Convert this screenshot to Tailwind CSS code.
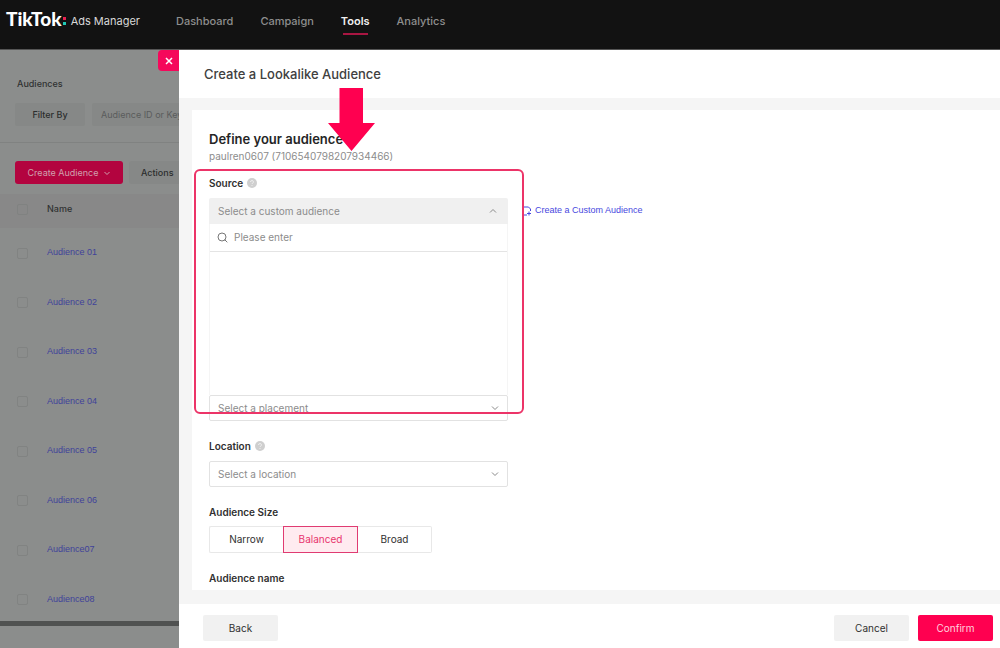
<!DOCTYPE html>
<html lang="en">
    <head>
        <meta charset="UTF-8" />
        <meta name="viewport" content="width=device-width, initial-scale=1.0" />
        <title>TikTok Ads Manager - Create a Lookalike Audience</title>
        <script src="https://cdn.jsdelivr.net/npm/@tailwindcss/browser@4"></script>
    </head>
    <body class="h-screen flex flex-col overflow-hidden bg-white font-['Inter',sans-serif] text-[10px] text-[#303030]">
        <!-- Top navigation -->
        <header class="h-[50px] shrink-0 flex items-start bg-[#121212] border-b border-[#555] px-1.5">
            <a href="#" class="flex items-center h-[42px] w-[170px] text-[11px] text-[#d8d8d8]">
                <span class="font-['Lato',sans-serif] font-black text-[19px] leading-5 pb-1 text-white">TikTok</span>
                <svg class="w-[5px] h-[10px] mr-1" viewBox="0 0 5 10" aria-hidden="true">
                    <rect x="1" y="1" width="3" height="3" fill="#e8204f" />
                    <rect x="1" y="6" width="3" height="3" fill="#1fc9b4" />
                </svg>
                <span>Ads Manager</span>
            </a>
            <nav class="flex gap-[27px] font-medium text-[#8e8e8e] text-[11px]">
                <a href="#" class="h-[42px] flex items-center">Dashboard</a>
                <a href="#" class="h-[42px] flex items-center">Campaign</a>
                <a href="#" class="relative h-[42px] flex items-center font-semibold text-[#f0f0f0]" aria-current="page">
                    Tools
                    <span class="absolute inset-x-0.5 bottom-[7px] h-0.5 bg-[#a81642]"></span>
                </a>
                <a href="#" class="h-[42px] flex items-center">Analytics</a>
            </nav>
        </header>

        <main class="flex-1 min-h-0 flex">
            <!-- Dimmed audience list -->
            <aside class="relative w-[179px] shrink-0 overflow-hidden bg-[#8b8d8c] whitespace-nowrap text-[9px]">
                <button class="absolute top-0 right-0 size-[21px] rounded-l bg-[#f5085b] flex items-center justify-center" aria-label="Close">
                    <svg class="size-2" viewBox="0 0 8 8" fill="none" stroke="#fff" stroke-width="1.5" aria-hidden="true">
                        <path d="M1 1l6 6M7 1L1 7" />
                    </svg>
                </button>

                <div class="h-[93px] pt-6 pl-[15px] border-b border-[#808281]">
                    <h2 class="pl-0.5 h-5 leading-5 font-medium text-[#303232]">Audiences</h2>
                    <div class="mt-[9px] flex gap-[7px]">
                        <button class="w-[70px] h-[23px] shrink-0 rounded-xs bg-[#868887] font-medium text-[#2c2e2e]">Filter By</button>
                        <input type="text" placeholder="Audience ID or Keyword" aria-label="Audience ID or Keyword" class="w-40 h-[23px] shrink-0 px-[9px] rounded-xs bg-[#868887] placeholder:text-[#5a5c5c]" />
                    </div>
                </div>

                <div class="flex gap-1.5 pt-[18px] pl-[15px]">
                    <button class="w-[108px] h-[23px] shrink-0 rounded-[3px] bg-[#b3043f] text-[#d0a0ae] flex items-center justify-center gap-1">
                        Create Audience
                        <svg class="size-2" viewBox="0 0 8 8" fill="none" stroke="currentColor" aria-hidden="true">
                            <path d="M1.5 3L4 5.5 6.5 3" />
                        </svg>
                    </button>
                    <button class="w-20 h-[23px] shrink-0 rounded-[3px] bg-[#868887] pl-3 text-left font-medium text-[#2c2e2e]">Actions</button>
                </div>

                <table class="mt-2.5 w-full text-left font-['Liberation_Sans',sans-serif] text-[#3f429a]">
                    <thead>
                        <tr class="h-[34px] bg-[#888888] font-['Inter',sans-serif] text-[#303232]">
                            <th class="w-[47px] pl-[17px] pb-1"><input type="checkbox" aria-label="Select all" class="block appearance-none size-[11px] border border-[#808281] rounded-xs" /></th>
                            <th class="pb-1 font-medium">Name</th>
                        </tr>
                    </thead>
                    <tbody>
                        <tr class="h-[50px]">
                            <td class="pl-[17px]"><input type="checkbox" aria-label="Audience 01" class="block appearance-none size-[11px] border border-[#818382] rounded-xs" /></td>
                            <td><a href="#">Audience 01</a></td>
                        </tr>
                        <tr class="h-[49px]">
                            <td class="pl-[17px]"><input type="checkbox" aria-label="Audience 02" class="block appearance-none size-[11px] border border-[#818382] rounded-xs" /></td>
                            <td><a href="#">Audience 02</a></td>
                        </tr>
                        <tr class="h-[50px]">
                            <td class="pl-[17px]"><input type="checkbox" aria-label="Audience 03" class="block appearance-none size-[11px] border border-[#818382] rounded-xs" /></td>
                            <td><a href="#">Audience 03</a></td>
                        </tr>
                        <tr class="h-[49px]">
                            <td class="pl-[17px]"><input type="checkbox" aria-label="Audience 04" class="block appearance-none size-[11px] border border-[#818382] rounded-xs" /></td>
                            <td><a href="#">Audience 04</a></td>
                        </tr>
                        <tr class="h-[50px]">
                            <td class="pl-[17px]"><input type="checkbox" aria-label="Audience 05" class="block appearance-none size-[11px] border border-[#818382] rounded-xs" /></td>
                            <td><a href="#">Audience 05</a></td>
                        </tr>
                        <tr class="h-[49px]">
                            <td class="pl-[17px]"><input type="checkbox" aria-label="Audience 06" class="block appearance-none size-[11px] border border-[#818382] rounded-xs" /></td>
                            <td><a href="#">Audience 06</a></td>
                        </tr>
                        <tr class="h-[50px]">
                            <td class="pl-[17px]"><input type="checkbox" aria-label="Audience07" class="block appearance-none size-[11px] border border-[#818382] rounded-xs" /></td>
                            <td><a href="#">Audience07</a></td>
                        </tr>
                        <tr class="h-[49px]">
                            <td class="pl-[17px]"><input type="checkbox" aria-label="Audience08" class="block appearance-none size-[11px] border border-[#818382] rounded-xs" /></td>
                            <td><a href="#">Audience08</a></td>
                        </tr>
                    </tbody>
                </table>
                <!-- Horizontal scrollbar -->
                <div class="absolute inset-x-0 bottom-[22px] h-[5px] bg-[#505251]"></div>
            </aside>

            <!-- Drawer -->
            <section class="flex-1 min-w-0 flex flex-col">
                <div class="h-12 shrink-0 flex items-center pl-[25px] pt-0.5">
                    <h1 class="text-[13px] font-medium text-[#404040]">Create a Lookalike Audience</h1>
                </div>

                <div class="flex-1 min-h-0 bg-[#f5f5f5] pt-3 pb-3.5 pl-[13px]">
                    <div class="relative h-full bg-white">
                        <form class="h-full overflow-hidden pl-[17px] pt-[19px]">
                            <h2 class="h-5 leading-5 text-[13px] font-semibold text-[#252525]">Define your audience</h2>
                            <p class="h-3.5 leading-3.5 text-[#8c8c8c]">paulren0607 (7106540798207934466)</p>

                            <div class="mt-2.5 flex items-center gap-1 h-5 font-semibold">
                                <label for="source">Source</label>
                                <svg class="size-2.5" viewBox="0 0 10 10" aria-hidden="true">
                                    <circle cx="5" cy="5" r="5" fill="#cfcfcf" />
                                    <path d="M3.6 4a1.4 1.4 0 1 1 2 1.2Q5 5.5 5 6M5 7v.9" fill="none" stroke="#f4f4f4" stroke-width=".9" />
                                </svg>
                            </div>
                            <div class="mt-[5px] flex items-center gap-3.5">
                                <div class="relative w-[299px]">
                                    <select id="source" class="block appearance-none w-full h-[26px] px-[9px] rounded-t-xs bg-[#f0f0f0] text-[#8c8c8c]">
                                        <option>Select a custom audience</option>
                                    </select>
                                    <svg class="absolute right-2.5 top-2 size-2.5 pointer-events-none" viewBox="0 0 10 10" fill="none" stroke="#8a8a8a" aria-hidden="true">
                                        <path d="M2 6.500L5 3.500 8 6.500" />
                                    </svg>
                                </div>
                                <a href="#" class="flex items-center gap-[3px] font-['Liberation_Sans',sans-serif] text-[9px] text-[#4747e0]">
                                    <svg class="size-2.5" viewBox="0 0 10 10" fill="none" stroke="currentColor" aria-hidden="true">
                                        <path d="M5 9H1.5V1H6.5L8.5 3V5M5 7.5H9M7 5.5V9.5" />
                                    </svg>
                                    Create a Custom Audience
                                </a>
                            </div>
                            <!-- Open drop-down list, empty -->
                            <div class="w-[299px] h-[171px] border-x border-[#f5f5f5]">
                                <label class="flex items-center gap-1.5 h-7 px-[7px] border-b border-[#e4e4e4]">
                                    <svg class="size-[11px]" viewBox="0 0 11 11" fill="none" stroke="#777" aria-hidden="true">
                                        <circle cx="5" cy="5" r="4" />
                                        <path d="M7.5 7.5L10.3 10.3" />
                                    </svg>
                                    <input type="text" placeholder="Please enter" class="flex-1 placeholder:text-[#8c8c8c]" />
                                </label>
                            </div>
                            <div class="relative w-[299px]">
                                <select aria-label="Placement" class="block appearance-none w-full h-[26px] px-2 rounded-xs border border-[#e2e2e2] bg-white text-[#8c8c8c]">
                                    <option>Select a placement</option>
                                </select>
                                <svg class="absolute right-2 top-2 size-2.5 pointer-events-none" viewBox="0 0 10 10" fill="none" stroke="#8a8a8a" aria-hidden="true">
                                    <path d="M2 3.5L5 6.5 8 3.5" />
                                </svg>
                            </div>

                            <div class="mt-[15px] flex items-center gap-1 h-5 font-semibold">
                                <label for="location">Location</label>
                                <svg class="size-2.5" viewBox="0 0 10 10" aria-hidden="true">
                                    <circle cx="5" cy="5" r="5" fill="#cfcfcf" />
                                    <path d="M3.6 4a1.4 1.4 0 1 1 2 1.2Q5 5.5 5 6M5 7v.9" fill="none" stroke="#f4f4f4" stroke-width=".9" />
                                </svg>
                            </div>
                            <div class="relative mt-[5px] w-[299px]">
                                <select id="location" class="block appearance-none w-full h-[26px] px-2 rounded-xs border border-[#e2e2e2] bg-white text-[#8c8c8c]">
                                    <option>Select a location</option>
                                </select>
                                <svg class="absolute right-2 top-2 size-2.5 pointer-events-none" viewBox="0 0 10 10" fill="none" stroke="#8a8a8a" aria-hidden="true">
                                    <path d="M2 3.5L5 6.5 8 3.5" />
                                </svg>
                            </div>

                            <h3 class="mt-[15px] h-5 leading-5 font-semibold">Audience Size</h3>
                            <div class="mt-1 flex">
                                <button type="button" class="w-[74px] h-[27px] rounded-l-xs border border-r-0 border-[#e8e8e8]">Narrow</button>
                                <button type="button" class="w-[75px] h-[27px] border border-[#e03b72] bg-[#ffebf0] text-[#e8346d]">Balanced</button>
                                <button type="button" class="w-[74px] h-[27px] rounded-r-xs border border-l-0 border-[#e8e8e8]">Broad</button>
                            </div>

                            <label for="audienceName" class="block mt-[15px] h-5 leading-5 font-semibold">Audience name</label>
                            <input id="audienceName" type="text" class="block mt-1 w-[299px] h-[26px] px-2 border border-[#dedede]" />
                        </form>

                        <!-- Callout frame and arrow -->
                        <div class="absolute left-0.5 top-[59px] w-[330px] h-[245px] border-2 border-[#ec3468] rounded-md pointer-events-none"></div>
                        <svg class="absolute left-[136px] -top-[22px] w-[47px] h-[63px] pointer-events-none" viewBox="0 0 47 63" fill="#ff0050" aria-hidden="true">
                            <path d="M11.5 0H35V35H47L23.5 63 0 35H11.5Z" />
                        </svg>
                    </div>
                </div>

                <div class="h-11 shrink-0 flex items-center gap-[9px] pl-6 pr-[7px] pt-1">
                    <button class="w-[75px] h-[26px] mr-auto rounded-xs bg-[#f1f1f1]">Back</button>
                    <button class="w-[75px] h-[26px] rounded-xs bg-[#f1f1f1]">Cancel</button>
                    <button class="w-[75px] h-[26px] rounded-xs bg-[#ff0050] text-[#ffd0de]">Confirm</button>
                </div>
            </section>
        </main>
    </body>
</html>
